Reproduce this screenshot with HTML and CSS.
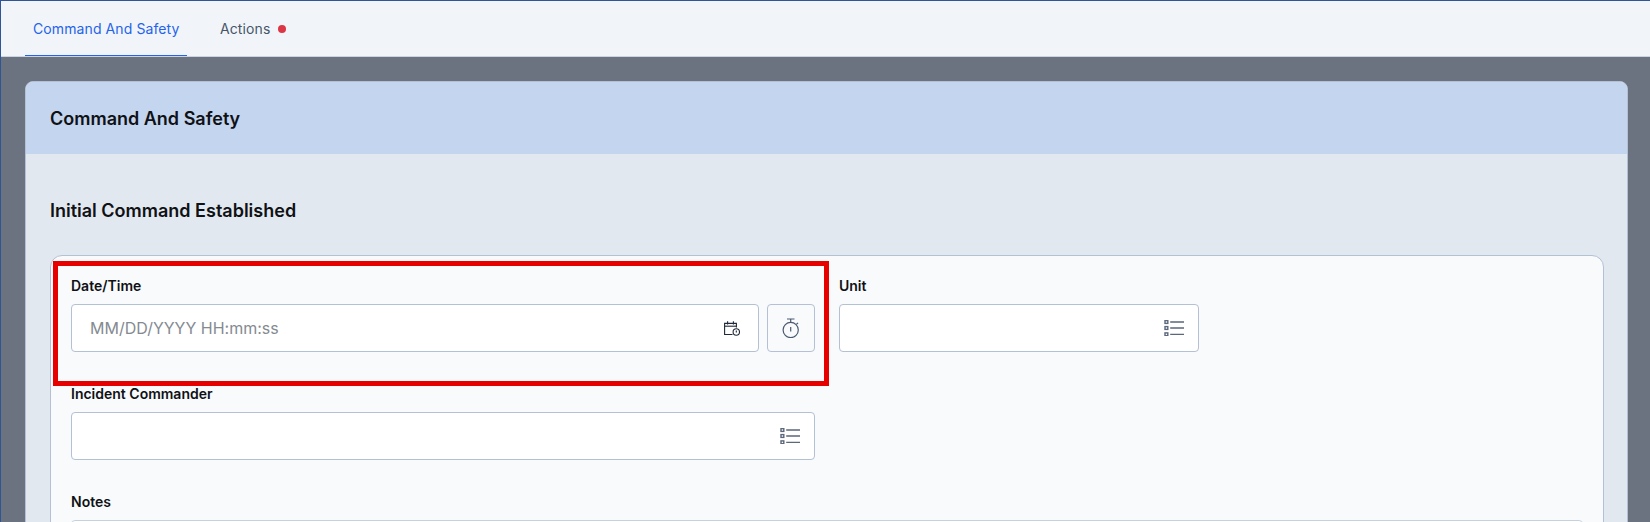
FILE: index.html
```html
<!DOCTYPE html>
<html lang="en">
<head>
    <meta charset="UTF-8">
    <title>Command And Safety</title>
    <link rel="stylesheet" href="styles.css">
</head>
<body>

    <nav class="tabs">
        <a class="tab active">Command And Safety</a>
        <a class="tab">Actions <span class="dot"></span></a>
    </nav>

    <main class="content">
        <section class="card">
            <header class="card-header">Command And Safety</header>
            <div class="card-body">
                <h2 class="section-title">Initial Command Established</h2>

                <div class="panel">
                    <div class="row">
                        <div class="field field-date">
                            <label>Date/Time</label>
                            <div class="date-line">
                                <div class="input input-date">
                                    <span class="placeholder">MM/DD/YYYY HH:mm:ss</span>
                                    <svg width="16" height="15" viewBox="0 0 16 15" fill="none" stroke="#1f2937" stroke-width="1.1">
                                        <path d="M8.5 13.5H.6V2.4h11.8v4.2"/>
                                        <path d="M.6 5.2h11.8"/>
                                        <path d="M3.6.2v3.4M9.4.2v3.4"/>
                                        <circle cx="12.3" cy="11" r="3.2"/>
                                        <path d="M12.3 9.4v2"/>
                                    </svg>
                                </div>
                                <button class="timer-btn">
                                    <svg width="18" height="20" viewBox="0 0 18 20" fill="none" stroke="#4b5a70" stroke-width="1.2">
                                        <circle cx="8.7" cy="12" r="7.6"/>
                                        <path d="M5 1h7.5M8.7 1v3.4"/>
                                        <path d="M8.7 9v4.6"/>
                                        <path d="M14.4 6.4l1.6-1.6"/>
                                    </svg>
                                </button>
                            </div>
                        </div>

                        <div class="field field-unit">
                            <label>Unit</label>
                            <div class="input">
                                <svg class="icon-list" width="20" height="16" viewBox="0 0 20 16" fill="none" stroke="#5b677a" stroke-width="1.3">
                                    <rect x="1" y=".6" width="2.8" height="2.8" stroke-width="1.4"/>
                                    <rect x="1" y="6.6" width="2.8" height="2.8" stroke-width="1.4"/>
                                    <rect x="1" y="12.9" width="2.8" height="2.8" stroke-width="1.4"/>
                                    <path d="M6.2 2h13.8M6.2 8h13.8M6.2 14.3h13.8"/>
                                </svg>
                            </div>
                        </div>
                    </div>

                    <div class="row">
                        <div class="field field-date">
                            <label>Incident Commander</label>
                            <div class="input">
                                <svg class="icon-list" width="20" height="16" viewBox="0 0 20 16" fill="none" stroke="#5b677a" stroke-width="1.3">
                                    <rect x="1" y=".6" width="2.8" height="2.8" stroke-width="1.4"/>
                                    <rect x="1" y="6.6" width="2.8" height="2.8" stroke-width="1.4"/>
                                    <rect x="1" y="12.9" width="2.8" height="2.8" stroke-width="1.4"/>
                                    <path d="M6.2 2h13.8M6.2 8h13.8M6.2 14.3h13.8"/>
                                </svg>
                            </div>
                        </div>
                    </div>

                    <div class="field">
                        <label>Notes</label>
                        <div class="notes"></div>
                    </div>
                </div>
            </div>
        </section>
    </main>

    <!-- highlight drawn over the date field -->
    <div class="highlight"></div>

</body>
</html>
```

FILE: styles.css
```css
html, body {
    margin: 0;
    height: 522px;
    overflow: hidden;
}

body {
    font-family: Inter, "Liberation Sans", sans-serif;
    background: #6b7280;
    border-top: 1px solid #2f5597;
    border-left: 1px solid #2f5597;
    box-sizing: border-box;
    position: relative;
}

.tabs {
    display: flex;
    height: 56px;
    padding-left: 24px;
    background: #f1f5f9;
    box-sizing: border-box;
    border-bottom: 1px solid #cbd5e1;
}

.tab {
    display: flex;
    align-items: center;
    gap: 5px;
    height: 55px;
    box-sizing: border-box;
    padding: 0 8px;
    font-size: 14px;
    letter-spacing: 0.1px;
    white-space: nowrap;
    color: #475569;
}

.tab + .tab {
    margin-left: 25px;
}

.tab.active {
    width: 162px;
    color: #2563eb;
    border-bottom: 1px solid #2563eb;
}

.dot {
    width: 8px;
    height: 8px;
    margin-left: 3px;
    border-radius: 50%;
    background: #dc3545;
}

.content {
    height: 465px;
    box-sizing: border-box;
    padding: 24px 22px 0 24px;
    overflow: hidden;
}

.card {
    border: 1px solid #b4c0d3;
    border-radius: 8px;
    background: #e2e8f0;
    overflow: hidden;
}

.card-header {
    height: 72px;
    padding-left: 24px;
    display: flex;
    align-items: center;
    background: #c4d5ef;
    font-size: 18px;
    font-weight: 600;
    color: #0f1115;
}

.card-body {
    padding: 0 23px 0 24px;
}

.section-title {
    margin: 0;
    padding: 45px 0 32px;
    font-size: 18px;
    line-height: 24px;
    font-weight: 600;
    color: #0f1115;
}

.panel {
    padding: 20px;
    background: #f8fafc;
    border: 1px solid #b4c0d3;
    border-radius: 12px;
}

.row {
    display: flex;
    gap: 24px;
}

.field {
    display: flex;
    flex-direction: column;
    padding-bottom: 32px;
}

.field-date {
    width: 744px;
}

.field-unit {
    width: 360px;
}

label {
    height: 20px;
    margin-bottom: 8px;
    font-size: 14px;
    line-height: 20px;
    font-weight: 600;
    color: #0f1115;
}

.date-line {
    display: flex;
    gap: 8px;
}

.input {
    height: 48px;
    box-sizing: border-box;
    display: flex;
    align-items: center;
    justify-content: space-between;
    padding: 0 14px 0 18px;
    background: #fff;
    border: 1px solid #b4c0d3;
    border-radius: 4px;
}

.input-date {
    flex: 1;
    padding-right: 18px;
}

.icon-list {
    margin-left: auto;
}

.placeholder {
    font-size: 16px;
    color: #858a91;
}

.timer-btn {
    width: 48px;
    height: 48px;
    padding: 0;
    display: flex;
    align-items: center;
    justify-content: center;
    background: #f8fafc;
    border: 1px solid #b4c0d3;
    border-radius: 4px;
}

.notes {
    height: 80px;
    background: #fff;
    border: 1px solid #c6d1e0;
    border-radius: 4px;
}

.highlight {
    position: absolute;
    left: 52px;
    top: 260px;
    width: 766px;
    height: 115px;
    border: 5px solid #e60000;
}
```
